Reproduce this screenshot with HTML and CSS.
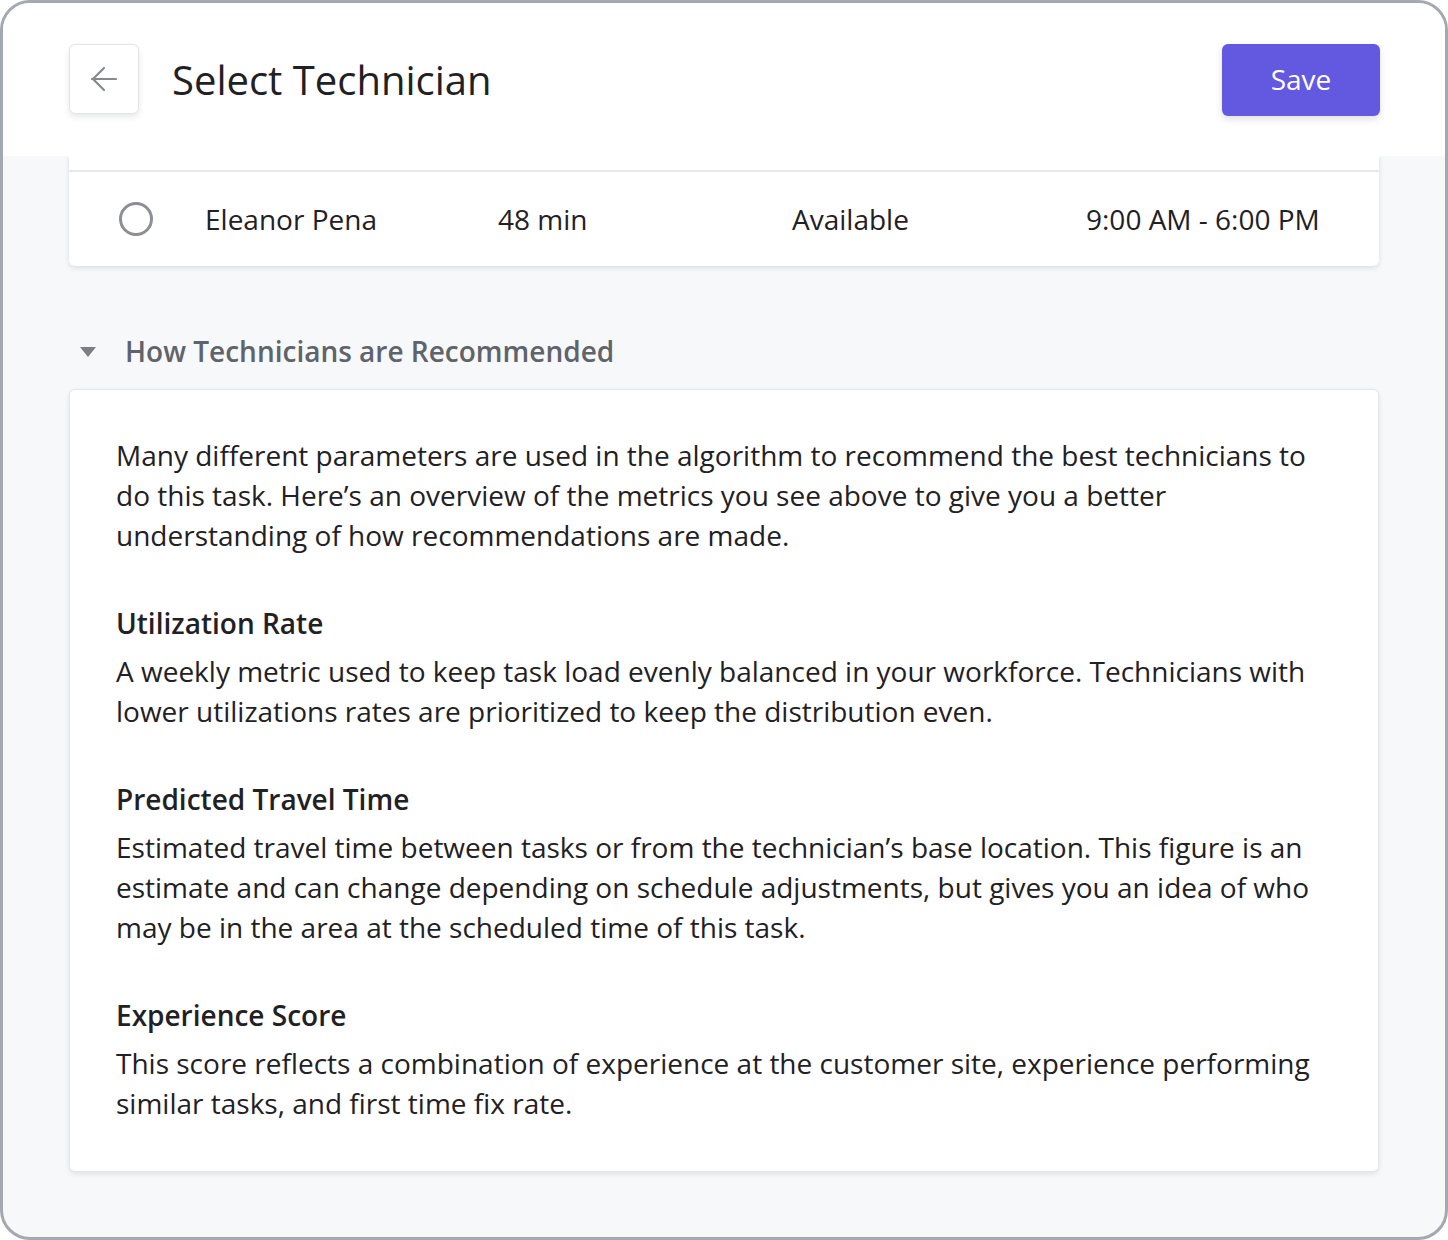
FILE: index.html
```html
<!DOCTYPE html>
<html>
<head>
<meta charset="utf-8">
<link rel="stylesheet" href="styles.css">
</head>
<body>
<div class="frame">
  <header class="header">
    <button class="back-btn" aria-label="Back">
      <svg width="30" height="30" viewBox="0 0 30 30" fill="none" stroke="#868a90" stroke-width="2.2" stroke-linecap="round" stroke-linejoin="round">
        <path d="M27 15H3"/>
        <path d="M15 4L4 15l11 11"/>
      </svg>
    </button>
    <h1 class="title">Select Technician</h1>
    <button class="save-btn">Save</button>
  </header>
  <main class="content">
    <div class="table-card">
      <div class="row-prev"></div>
      <div class="row">
        <span class="radio"></span>
        <span class="cell">Eleanor Pena</span>
        <span class="cell">48 min</span>
        <span class="cell">Available</span>
        <span class="cell">9:00 AM - 6:00 PM</span>
      </div>
    </div>
    <div class="disclosure">
      <span class="caret"></span>
      <span class="disclosure-label">How Technicians are Recommended</span>
    </div>
    <section class="info-card">
      <p class="text">Many different parameters are used in the algorithm to recommend the best technicians to do this task. Here’s an overview of the metrics you see above to give you a better understanding of how recommendations are made.</p>
      <div class="metric">
        <h3 class="metric-title">Utilization Rate</h3>
        <p class="text">A weekly metric used to keep task load evenly balanced in your workforce. Technicians with lower utilizations rates are prioritized to keep the distribution even.</p>
      </div>
      <div class="metric">
        <h3 class="metric-title">Predicted Travel Time</h3>
        <p class="text">Estimated travel time between tasks or from the technician’s base location. This figure is an estimate and can change depending on schedule adjustments, but gives you an idea of who may be in the area at the scheduled time of this task.</p>
      </div>
      <div class="metric">
        <h3 class="metric-title">Experience Score</h3>
        <p class="text">This score reflects a combination of experience at the customer site, experience performing similar tasks, and first time fix rate.</p>
      </div>
    </section>
  </main>
</div>
</body>
</html>
```
FILE: styles.css
```css
* { box-sizing: border-box; }
html, body { margin: 0; padding: 0; background: #ffffff; }
body { font-family: "Open Sans", "Noto Sans", sans-serif; color: #1f2124; }

.frame {
  width: 1448px;
  height: 1240px;
  border: 3px solid #a4a9af;
  border-radius: 30px;
  overflow: hidden;
  background: #f7f8fa;
  display: flex;
  flex-direction: column;
}

.header {
  position: relative;
  z-index: 2;
  height: 153px;
  flex: none;
  background: #ffffff;
  display: flex;
  align-items: center;
  padding: 0 65px 0 66px;
}

.back-btn {
  width: 70px;
  height: 70px;
  border: 1px solid #e3e4e7;
  border-radius: 6px;
  background: #ffffff;
  box-shadow: 0 3px 6px rgba(20, 25, 35, 0.10);
  display: flex;
  align-items: center;
  justify-content: center;
  padding: 0;
  margin-top: -1px;
}

.title {
  margin: 0 0 0 33px;
  font-size: 40px;
  font-weight: 400;
  color: #1f2124;
  flex: 1;
}

.save-btn {
  width: 158px;
  height: 72px;
  border: none;
  border-radius: 6px;
  background: #6359e1;
  color: #ffffff;
  font-family: "Open Sans", "Noto Sans", sans-serif;
  font-size: 28px;
  box-shadow: 0 3px 7px rgba(40, 40, 80, 0.15);
  padding: 0 0 2px 0;
}

.content {
  position: relative;
  z-index: 1;
  padding: 0 66px;
}

.table-card {
  background: #ffffff;
  border-radius: 0 0 6px 6px;
  box-shadow: 0 2px 5px rgba(20, 25, 35, 0.12);
}

.row-prev {
  height: 16px;
  border-bottom: 2px solid #e6e7e9;
}

.row {
  height: 94px;
  display: grid;
  grid-template-columns: 86px 293px 294px 294px 1fr;
  align-items: center;
  padding-left: 50px;
  font-size: 28px;
  color: #1f2124;
}

.radio {
  width: 34px;
  height: 34px;
  border: 3px solid #8c9095;
  border-radius: 50%;
}

.cell { white-space: nowrap; }

.disclosure {
  margin-top: 65px;
  height: 40px;
  display: flex;
  align-items: center;
  padding-left: 11px;
}

.caret {
  width: 0;
  height: 0;
  border-left: 8px solid transparent;
  border-right: 8px solid transparent;
  border-top: 10px solid #7b7f85;
  margin-right: 29px;
  margin-top: 2px;
}

.disclosure-label {
  font-size: 28px;
  font-weight: 600;
  color: #5f636a;
}

.info-card {
  margin-top: 18px;
  background: #ffffff;
  border: 1px solid #e5e6e9;
  border-radius: 6px;
  box-shadow: 0 2px 5px rgba(20, 25, 35, 0.10);
  padding: 45px 46px 48px 46px;
}

.text {
  margin: 0;
  font-size: 28px;
  line-height: 40px;
  color: #1f2124;
}

.metric { margin-top: 48px; }

.metric-title {
  margin: 0 0 8px 0;
  font-size: 28px;
  line-height: 40px;
  font-weight: 600;
  color: #1f2124;
}
```
